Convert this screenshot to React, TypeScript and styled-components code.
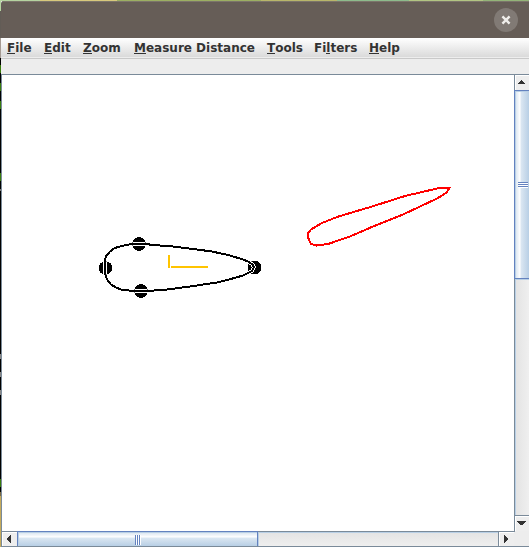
import React from "react";
import styled, { createGlobalStyle } from "styled-components";

const Global = createGlobalStyle`
  * { box-sizing: border-box; }
  body { margin: 0; overflow: hidden; }
`;

const Desktop = styled.div`
  width: 529px;
  height: 547px;
  padding: 1px 0 0 1px;
  background:
    linear-gradient(to right, #b5d3a0 0 40px, #d8c97c 40px 117px, #9caf62 117px 261px, #b9b66a 261px 337px, #8dbb8c 337px 409px, #b2c583 409px 483px, #93b478 483px) 0 0 / 529px 1px no-repeat,
    linear-gradient(#b5d3a0 0 11px, #625c56 11px 38px, #a59a92 38px 58px, #000 58px 65px, #397c0c 65px 73px, #000 73px 83px, #397c0c 83px 91px, #000 91px 101px, #397c0c 101px 109px, #000 109px 173px, #397c0c 173px 181px, #000 181px 189px, #777 189px 191px, #000 191px 354px, #888 354px 359px, #000 359px 372px, #888 372px 377px, #000 377px 390px, #888 390px 395px, #000 395px 479px, #397c0c 479px 487px, #000 487px 492px, #7b6942 492px 496px, #c5aa5b 496px) 0 0 / 1px 547px no-repeat;
`;

const Window = styled.main`
  height: 546px;
  display: flex;
  flex-direction: column;
  background: #ededed;
  border-radius: 3px 0 0 0;
  overflow: hidden;
`;

const TitleBar = styled.header`
  height: 37px;
  flex: none;
  display: flex;
  justify-content: flex-end;
  align-items: center;
  padding: 0 11px 1px 0;
  background: #665d57;
  border-top: 1px solid #7c756b;
`;

const CloseButton = styled.button`
  width: 24px;
  height: 24px;
  padding: 0;
  border: 0;
  border-radius: 50%;
  background: #817a75;
  display: grid;
  place-items: center;
`;

const MenuBar = styled.nav`
  height: 21px;
  flex: none;
  display: flex;
  padding: 0 0 0 6px;
  gap: 13px;
  background: linear-gradient(#fff, #dadada 19px, #ededed 19px 20px, #c9c9c9 20px);
  font: bold 12px/20px "DejaVu Sans", sans-serif;
  color: #333;
`;

const MenuItem = styled.span<{ $width: number }>`
  width: ${(p) => p.$width}px;
  flex: none;
  white-space: nowrap;
`;

const Mnemonic = styled.span`
  display: inline-block;
  height: 16px;
  line-height: 20px;
  border-bottom: 1px solid #333;
  vertical-align: top;
`;

const Toolbar = styled.div`
  height: 15px;
  flex: none;
`;

const ScrollPane = styled.section`
  flex: 1;
  display: grid;
  grid-template-columns: 513px 14px;
  grid-template-rows: 456px 16px;
  border-top: 1px solid #7a8a99;
  border-left: 1px solid #7a8a99;
`;

const Canvas = styled.div`
  background: #fff;
  border-right: 1px solid #7a8a99;
  svg { display: block; }
`;

const VScroll = styled.div`
  display: flex;
  flex-direction: column;
`;

const HScroll = styled.div`
  display: flex;
  border-top: 1px solid #7a8a99;
  border-bottom: 1px solid #7a8a99;
`;

const Corner = styled.div`
  border-bottom: 1px solid #7a8a99;
`;

const ArrowButton = styled.button<{ $w: number; $h: number }>`
  width: ${(p) => p.$w}px;
  height: ${(p) => p.$h}px;
  flex: none;
  padding: 0;
  border: 0;
  background: #eee;
  box-shadow: inset 1px 1px #fff;
  svg { display: block; }
`;

const VThumb = styled.div`
  height: 189px;
  margin-left: -1px;
  flex: none;
  border: 1px solid #6382bf;
  border-right: 0;
  box-shadow: inset 1px 1px #b8cfe5;
  background: linear-gradient(to right, #d5e2ee 0, #fff 5px, #dbe7f2 6px, #b8cfe5 14px);
  padding: 91px 0 0 3px;
`;

const HThumb = styled.div`
  width: 241px;
  height: 15px;
  margin-top: -1px;
  flex: none;
  border: 1px solid #6382bf;
  border-bottom: 0;
  box-shadow: inset 1px 1px #b8cfe5;
  background: linear-gradient(#d5e2ee 0, #fff 5px, #dbe7f2 6px, #b8cfe5 14px);
  padding: 3px 0 0 117px;
`;

const Grip = styled.div<{ $vertical?: boolean }>`
  width: ${(p) => (p.$vertical ? 6 : 10)}px;
  height: ${(p) => (p.$vertical ? 10 : 6)}px;
  background: repeating-linear-gradient(${(p) => (p.$vertical ? "to right" : "to bottom")}, #6382bf 0 1px, #fff 1px 2px);
`;

const VTrack = styled.div`
  height: 237px;
  background: linear-gradient(to right, #e3e3e3, #efefef);
  border-bottom: 1px solid #7a8a99;
  box-shadow: inset 1px 1px #b8cfe5;
`;

const HTrack = styled.div`
  width: 241px;
  background: linear-gradient(#e3e3e3, #efefef);
  border-right: 1px solid #7a8a99;
  box-shadow: inset 1px 1px #b8cfe5;
`;

const menus = [
  { before: "", key: "F", after: "ile", width: 24 },
  { before: "", key: "E", after: "dit", width: 26 },
  { before: "", key: "Z", after: "oom", width: 38 },
  { before: "", key: "M", after: "easure Distance", width: 120 },
  { before: "", key: "T", after: "ools", width: 34 },
  { before: "Fi", key: "l", after: "ters", width: 42 },
  { before: "", key: "H", after: "elp", width: 30 },
];

const blackOutline =
  "M132 244 L146 244 L153 245 L173 246.5 L193 249 L212 251.5 L228 255 L240 258.5 L247 261 L252 264 L254 267 L252 271 L243 275.5 L229 279.5 L217 282.5 L190 286.5 L167 289.5 L154 290.5 L140 291 L129 290.5 L122 290 L116 287.5 L111 284.5 L108 281 L106 277 L105 272 L105 260 L106 256 L110 251.5 L114 248.5 L118 247 L124 245.5 Z";
const redOutline =
  "M449.5 188 L443 187.5 L437 188.5 L405 196 L372 206.5 L337 217 L322 223 L311 229.5 L308 233 L308 237 L309.5 241 L311 244 L316.5 245.5 L328 244 L350 236.5 L373 226.5 L403 214.5 L437 198.5 L446 193 Z";
const handles = [[139, 244], [105.5, 268], [141, 291], [254.5, 267.5]];

export default function App() {
  return (
    <Desktop>
      <Global />
      <Window>
        <TitleBar>
          <CloseButton aria-label="Close">
            <svg width="10" height="10" viewBox="0 0 10 10">
              <path d="M1.4 1.4 L8.6 8.6 M8.6 1.4 L1.4 8.6" stroke="#f0eeeb" strokeWidth="2.4" />
            </svg>
          </CloseButton>
        </TitleBar>
        <MenuBar>
          {menus.map((m) => (
            <MenuItem key={m.after} $width={m.width}>
              {m.before}<Mnemonic>{m.key}</Mnemonic>{m.after}
            </MenuItem>
          ))}
        </MenuBar>
        <Toolbar />
        <ScrollPane>
          <Canvas>
            <svg width="512" height="456" viewBox="2 75 512 456" shapeRendering="crispEdges" fill="none">
              <defs>
                <clipPath id="handles">
                  {handles.map(([x, y]) => <circle key={x} cx={x} cy={y} r="6.8" />)}
                </clipPath>
              </defs>
              {handles.map(([x, y]) => <circle key={x} cx={x} cy={y} r="6.8" fill="#000" />)}
              <path d={blackOutline} stroke="#fff" strokeWidth="4" clipPath="url(#handles)" />
              <path d={blackOutline} stroke="#000" strokeWidth="2" />
              <path d={redOutline} stroke="#f00" strokeWidth="2" />
              <path d="M169 255 V268 M171 267 H208" stroke="#ffc400" strokeWidth="2" />
            </svg>
          </Canvas>
          <VScroll>
            <ArrowButton $w={14} $h={15} aria-label="Scroll up">
              <svg width="14" height="15" shapeRendering="crispEdges"><path d="M6 5h1v1h1v1h1v1h1v1H3V8h1V7h1V6h1z" fill="#333" /></svg>
            </ArrowButton>
            <VThumb><Grip /></VThumb>
            <VTrack />
            <ArrowButton $w={14} $h={15} aria-label="Scroll down">
              <svg width="14" height="15" shapeRendering="crispEdges"><path d="M2 5h9v1h-1v1h-1v1H8v1H5V8H4V7H3V6H2z" fill="#333" /></svg>
            </ArrowButton>
          </VScroll>
          <HScroll>
            <ArrowButton $w={15} $h={14} aria-label="Scroll left">
              <svg width="15" height="14" shapeRendering="crispEdges"><path d="M9 3v8H8v-1H7V9H6V8H5V6h1V5h1V4h1V3z" fill="#333" /></svg>
            </ArrowButton>
            <HThumb><Grip $vertical /></HThumb>
            <HTrack />
            <ArrowButton $w={15} $h={14} aria-label="Scroll right">
              <svg width="15" height="14" shapeRendering="crispEdges"><path d="M5 3h1v1h1v1h1v1h1v2H8v1H7v1H6v1H5z" fill="#333" /></svg>
            </ArrowButton>
          </HScroll>
          <Corner />
        </ScrollPane>
      </Window>
    </Desktop>
  );
}
